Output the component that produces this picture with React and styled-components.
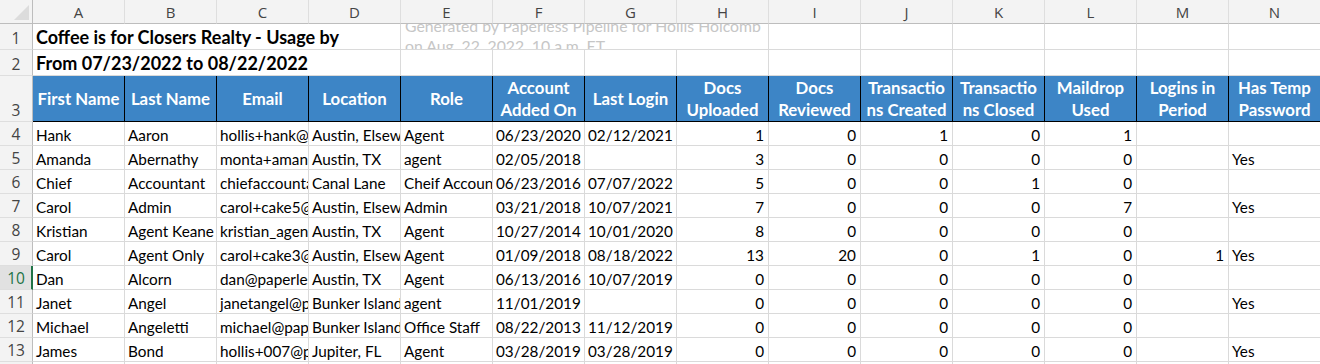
import React from "react";
import styled, { createGlobalStyle } from "styled-components";

const GlobalStyle = createGlobalStyle`
  html, body { margin: 0; padding: 0; background: #ffffff; overflow: hidden; }
  * { box-sizing: border-box; }
`;

const GRID = "#dadada";
const HEAD_LINE = "#bdbdbd";
const BLUE = "#3d85c6";

const Sheet = styled.div`
  display: grid;
  grid-template-columns: 33px repeat(14, 92px);
  grid-template-rows: 24px 26px 26px 46px repeat(11, 24px);
  width: 1320px;
  height: 364px;
  overflow: hidden;
  background: #fff;
  font-family: Lato, "Open Sans", sans-serif;
  color: #000;
`;

const Corner = styled.div`
  position: relative;
  background: #f3f3f3;
  border-right: 1px solid ${HEAD_LINE};
  border-bottom: 1px solid ${HEAD_LINE};
  &::after {
    content: "";
    position: absolute;
    right: 3px;
    bottom: 3px;
    width: 0;
    height: 0;
    border-left: 15px solid transparent;
    border-bottom: 15px solid #dcdcdc;
  }
`;

const ColHead = styled.div`
  background: #f3f3f3;
  border-right: 1px solid #dedede;
  border-bottom: 1px solid ${HEAD_LINE};
  display: flex;
  align-items: center;
  justify-content: center;
  font-family: "Open Sans", "Noto Sans", sans-serif;
  font-size: 15px;
  color: #444;
  padding-top: 1px;
`;

const RowHead = styled.div`
  background: ${(p) => (p.$selected ? "#e1e1e1" : "#f3f3f3")};
  border-right: ${(p) => (p.$selected ? "2px solid #217346" : `1px solid ${HEAD_LINE}`)};
  border-bottom: 1px solid #dedede;
  display: flex;
  align-items: flex-end;
  justify-content: center;
  padding-bottom: 1px;
  padding-left: ${(p) => (p.$selected ? "1px" : "0")};
  font-family: "Open Sans", "Noto Sans", sans-serif;
  font-size: 15.5px;
  line-height: 20px;
  color: ${(p) => (p.$selected ? "#217346" : "#444")};
`;

const Cell = styled.div`
  border-right: 1px solid ${GRID};
  border-bottom: 1px solid ${GRID};
  display: flex;
  align-items: flex-end;
  justify-content: ${(p) => (p.$num ? "flex-end" : "flex-start")};
  padding: 0 ${(p) => (p.$num ? "4px" : "2px")} 1px 3px;
  font-size: 15.3px;
  line-height: 18px;
  white-space: nowrap;
  overflow: hidden;
`;

const TitleCell = styled.div`
  grid-column: span 4;
  border-right: 1px solid ${GRID};
  border-bottom: 1px solid ${GRID};
  display: flex;
  align-items: flex-end;
  padding: 0 2px 1px 3px;
  font-size: 18px;
  font-weight: 700;
  line-height: 21px;
  white-space: nowrap;
  overflow: hidden;
`;

const NoteCell = styled.div`
  grid-column: span 4;
  border-right: 1px solid ${GRID};
  border-bottom: 1px solid ${GRID};
  display: flex;
  flex-direction: column;
  justify-content: center;
  padding: 0 4px 2px;
  font-size: 15.8px;
  line-height: 20px;
  color: #c6c6c6;
  white-space: nowrap;
  overflow: hidden;
`;

const NoteLine = styled.span`
  display: block;
  flex: none;
`;

const HeadCell = styled.div`
  background: ${BLUE};
  border-right: 1px solid #000;
  border-bottom: 1px solid #000;
  display: flex;
  align-items: center;
  justify-content: center;
  text-align: center;
  padding: 1px 0 0;
  color: #fff;
  font-size: 16.8px;
  font-weight: 700;
  line-height: 22px;
  white-space: nowrap;
  overflow: hidden;
`;

const COLS = ["A", "B", "C", "D", "E", "F", "G", "H", "I", "J", "K", "L", "M", "N"];

const HEADERS = [
  ["First Name"],
  ["Last Name"],
  ["Email"],
  ["Location"],
  ["Role"],
  ["Account", "Added On"],
  ["Last Login"],
  ["Docs", "Uploaded"],
  ["Docs", "Reviewed"],
  ["Transactio", "ns Created"],
  ["Transactio", "ns Closed"],
  ["Maildrop", "Used"],
  ["Logins in", "Period"],
  ["Has Temp", "Password"],
];

const ROWS = [
  ["Hank", "Aaron", "hollis+hank@paperlesspipeline.com", "Austin, Elsewhere", "Agent", "06/23/2020", "02/12/2021", 1, 0, 1, 0, 1, "", ""],
  ["Amanda", "Abernathy", "monta+amanda@paperlesspipeline.com", "Austin, TX", "agent", "02/05/2018", "", 3, 0, 0, 0, 0, "", "Yes"],
  ["Chief", "Accountant", "chiefaccountant@paperlesspipeline.com", "Canal Lane", "Cheif Accountant", "06/23/2016", "07/07/2022", 5, 0, 0, 1, 0, "", ""],
  ["Carol", "Admin", "carol+cake5@paperlesspipeline.com", "Austin, Elsewhere", "Admin", "03/21/2018", "10/07/2021", 7, 0, 0, 0, 7, "", "Yes"],
  ["Kristian", "Agent Keane", "kristian_agent@paperlesspipeline.com", "Austin, TX", "Agent", "10/27/2014", "10/01/2020", 8, 0, 0, 0, 0, "", ""],
  ["Carol", "Agent Only", "carol+cake3@paperlesspipeline.com", "Austin, Elsewhere", "Agent", "01/09/2018", "08/18/2022", 13, 20, 0, 1, 0, 1, "Yes"],
  ["Dan", "Alcorn", "dan@paperlesspipeline.com", "Austin, TX", "Agent", "06/13/2016", "10/07/2019", 0, 0, 0, 0, 0, "", ""],
  ["Janet", "Angel", "janetangel@paperlesspipeline.com", "Bunker Island", "agent", "11/01/2019", "", 0, 0, 0, 0, 0, "", "Yes"],
  ["Michael", "Angeletti", "michael@paperlesspipeline.com", "Bunker Island", "Office Staff", "08/22/2013", "11/12/2019", 0, 0, 0, 0, 0, "", ""],
  ["James", "Bond", "hollis+007@paperlesspipeline.com", "Jupiter, FL", "Agent", "03/28/2019", "03/28/2019", 0, 0, 0, 0, 0, "", "Yes"],
];

export default function App() {
  return (
    <>
      <GlobalStyle />
      <Sheet>
        <Corner />
        {COLS.map((c) => (
          <ColHead key={c}>{c}</ColHead>
        ))}

        <RowHead>1</RowHead>
        <TitleCell>Coffee is for Closers Realty - Usage by</TitleCell>
        <NoteCell>
          <NoteLine>Generated by Paperless Pipeline for Hollis Holcomb</NoteLine>
          <NoteLine>on Aug. 22, 2022, 10 a.m. ET</NoteLine>
        </NoteCell>
        {COLS.slice(8).map((c) => (
          <Cell key={`r1${c}`} />
        ))}

        <RowHead>2</RowHead>
        <TitleCell>From 07/23/2022 to 08/22/2022</TitleCell>
        {COLS.slice(4).map((c) => (
          <Cell key={`r2${c}`} />
        ))}

        <RowHead>3</RowHead>
        {HEADERS.map((lines, i) => (
          <HeadCell key={`h${i}`}>
            <span>
              {lines.map((l, j) => (
                <React.Fragment key={j}>
                  {j > 0 && <br />}
                  {l}
                </React.Fragment>
              ))}
            </span>
          </HeadCell>
        ))}

        {ROWS.map((row, r) => (
          <React.Fragment key={`row${r}`}>
            <RowHead $selected={r + 4 === 10}>{r + 4}</RowHead>
            {row.map((v, i) => (
              <Cell key={`c${r}-${i}`} $num={typeof v === "number"}>
                {v}
              </Cell>
            ))}
          </React.Fragment>
        ))}

        <RowHead>14</RowHead>
        {COLS.map((c) => (
          <Cell key={`r14${c}`} />
        ))}
      </Sheet>
    </>
  );
}
